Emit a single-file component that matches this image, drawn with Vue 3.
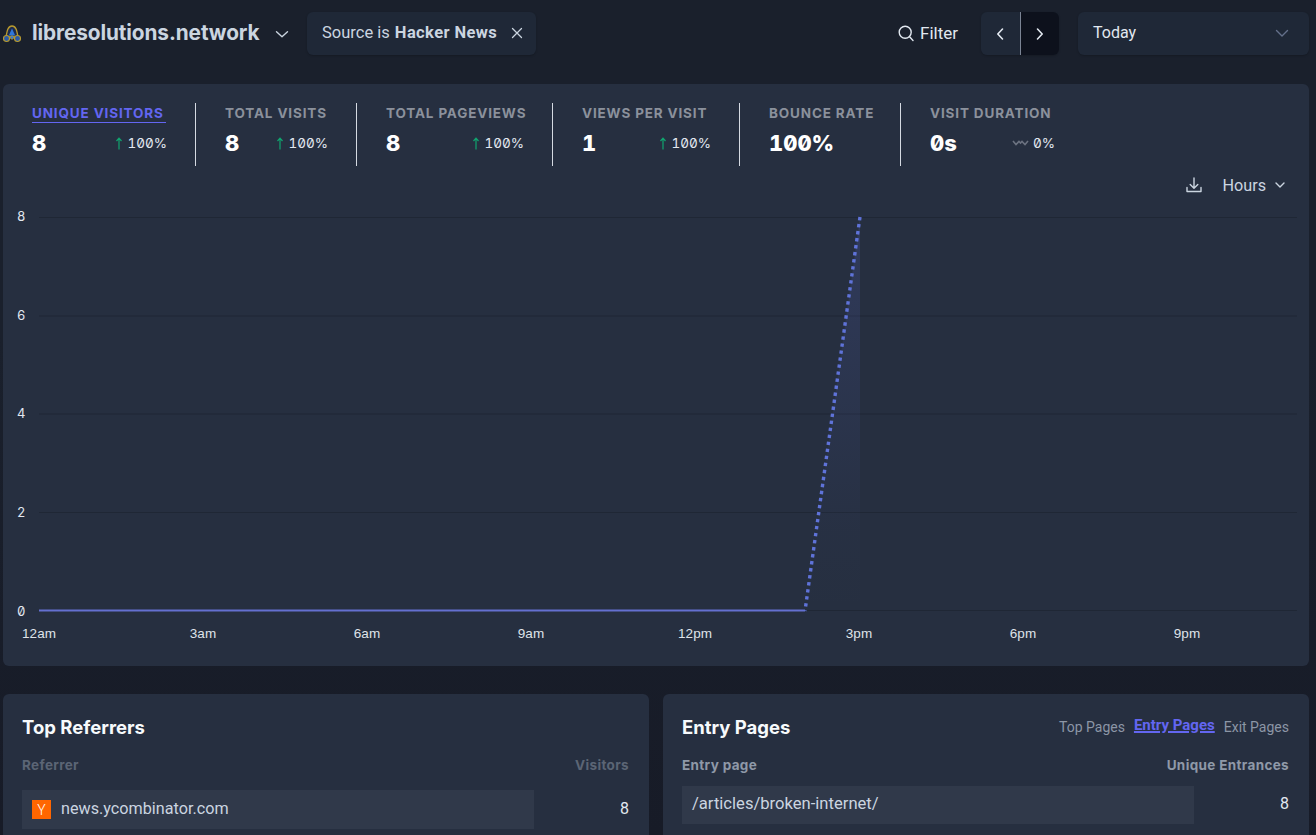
<script setup>
const stats = [
  { label: 'Unique visitors', value: '8', change: '100%', dir: 'up', active: true },
  { label: 'Total visits', value: '8', change: '100%', dir: 'up' },
  { label: 'Total pageviews', value: '8', change: '100%', dir: 'up' },
  { label: 'Views per visit', value: '1', change: '100%', dir: 'up' },
  { label: 'Bounce rate', value: '100%' },
  { label: 'Visit duration', value: '0s', change: '0%', dir: 'flat' }
]
const gridLines = [
  { y: 217.5, base: 221, label: '8' },
  { y: 316, base: 319.5, label: '6' },
  { y: 414, base: 417.5, label: '4' },
  { y: 512.5, base: 517, label: '2' },
  { y: 610.5, base: 616, label: '0' }
]
const hours = [
  { x: 39, label: '12am' },
  { x: 203, label: '3am' },
  { x: 367, label: '6am' },
  { x: 531, label: '9am' },
  { x: 695, label: '12pm' },
  { x: 859, label: '3pm' },
  { x: 1023, label: '6pm' },
  { x: 1187, label: '9pm' }
]
</script>

<template>
  <div class="page">
    <header class="topbar">
      <div class="site">
        <svg class="favicon" width="18" height="18" viewBox="0 0 18 18">
          <path d="M9 1 C5.200 1 4.200 5 3 12 L15 12 C13.800 5 12.800 1 9 1Z" fill="#1d2b4d" stroke="#b89a2e" stroke-width="1.300" />
          <path d="M9 3.500 L5.800 10.500 H12.200Z" fill="#2f78dc" />
          <circle cx="3.500" cy="13.500" r="3" fill="#2a5aa8" stroke="#b89a2e" stroke-width="1.100" />
          <circle cx="14.500" cy="13.500" r="3" fill="#2a5aa8" stroke="#b89a2e" stroke-width="1.100" />
          <circle cx="9" cy="12.500" r="1.700" fill="#2f78dc" stroke="#b89a2e" stroke-width=".8" />
        </svg>
        <span class="site-name">libresolutions.network</span>
        <svg class="site-chev" width="14" height="14" viewBox="0 0 14 14"><path d="M1.500 4.800 7 9.800l5.500-5" fill="none" stroke="#cbd5e0" stroke-width="1.400" stroke-linecap="round" stroke-linejoin="round" /></svg>
      </div>
      <div class="chip">
        <span>Source is <b>Hacker News</b></span>
        <svg width="12" height="12" viewBox="0 0 12 12"><path d="M1.500 1.500l9 9M10.500 1.500l-9 9" stroke="#cbd5e0" stroke-width="1.300" stroke-linecap="round" /></svg>
      </div>
      <div class="spacer"></div>
      <div class="filter">
        <svg width="18" height="18" viewBox="0 0 18 18"><circle cx="8.200" cy="8.200" r="6" fill="none" stroke="#e2e8f0" stroke-width="1.400" /><path d="M12.600 12.800 16 16.400" stroke="#e2e8f0" stroke-width="1.400" stroke-linecap="round" /></svg>
        <span>Filter</span>
      </div>
      <div class="pager">
        <div class="pager-btn">
          <svg width="10" height="14" viewBox="0 0 10 14"><path d="M7.500 2 2.800 7l4.700 5" fill="none" stroke="#e2e8f0" stroke-width="1.600" stroke-linecap="round" stroke-linejoin="round" /></svg>
        </div>
        <div class="pager-btn dark">
          <svg width="10" height="14" viewBox="0 0 10 14"><path d="M2.500 2l4.700 5-4.700 5" fill="none" stroke="#e2e8f0" stroke-width="1.600" stroke-linecap="round" stroke-linejoin="round" /></svg>
        </div>
      </div>
      <div class="period">
        <span>Today</span>
        <svg width="14" height="14" viewBox="0 0 14 14"><path d="M1.500 4.500 7 10l5.500-5.500" fill="none" stroke="#64708a" stroke-width="1.400" stroke-linecap="round" stroke-linejoin="round" /></svg>
      </div>
    </header>

    <section class="card main">
      <div class="stats">
        <div v-for="s in stats" :key="s.label" class="stat">
          <div class="stat-inner">
            <div class="stat-label" :class="{ active: s.active }">{{ s.label }}</div>
            <div class="stat-row">
              <span class="stat-value">{{ s.value }}</span>
              <span v-if="s.change" class="stat-change">
                <svg v-if="s.dir === 'up'" width="8" height="13" viewBox="0 0 8 13"><path d="M4 12.500V1.500M1.500 4 4 1.200 6.500 4" fill="none" stroke="#10a56f" stroke-width="1.200" /></svg>
                <svg v-else width="17" height="8" viewBox="0 0 17 8"><path d="M1 2 4 5.500 7 2.500l1.500 1.500L10 2.500l3 3 3-3.500" fill="none" stroke="#6b7280" stroke-width="1.600" /></svg>
                <span>{{ s.change }}</span>
              </span>
            </div>
          </div>
        </div>
      </div>

      <div class="tools">
        <svg width="18" height="18" viewBox="0 0 18 18"><path d="M9 2v10M5.200 8.500 9 12.300l3.800-3.800M2 11.500v4h14v-4" fill="none" stroke="#cbd5e0" stroke-width="1.400" stroke-linecap="round" stroke-linejoin="round" /></svg>
        <span class="hours">Hours</span>
        <svg width="10" height="10" viewBox="0 0 10 10"><path d="M1 3 5 7l4-4" fill="none" stroke="#cbd5e0" stroke-width="1.400" stroke-linecap="round" stroke-linejoin="round" /></svg>
      </div>

      <svg class="chart" width="1306" height="460" viewBox="3 198 1306 460">
        <defs>
          <linearGradient id="areaFill" x1="0" y1="0" x2="0" y2="1">
            <stop offset="0" stop-color="#5f6fd6" stop-opacity=".18" />
            <stop offset=".8" stop-color="#5f6fd6" stop-opacity=".02" />
            <stop offset="1" stop-color="#5f6fd6" stop-opacity="0" />
          </linearGradient>
        </defs>
        <line v-for="g in gridLines" :key="g.y" x1="39" x2="1297" :y1="g.y" :y2="g.y" stroke="#1f2735" stroke-width="1" />
        <text v-for="g in gridLines" :key="'l' + g.y" x="17" :y="g.base" class="ylabel">{{ g.label }}</text>
        <polygon points="805,611 860,218 860,611" fill="url(#areaFill)" />
        <line x1="39" y1="610.500" x2="805" y2="610.500" stroke="#6470d0" stroke-width="2" />
        <line x1="860" y1="217" x2="805" y2="611" stroke="#5f73d9" stroke-width="3.400" stroke-dasharray="3.400 3.690" />
        <text v-for="h in hours" :key="h.label" :x="h.x" y="638" text-anchor="middle" class="xlabel">{{ h.label }}</text>
      </svg>
    </section>

    <div class="panels">
      <section class="card panel">
        <div class="panel-head"><h3>Top Referrers</h3></div>
        <div class="cols dim"><span>Referrer</span><span>Visitors</span></div>
        <div class="row">
          <div class="bar ref">
            <span class="yc">Y</span>
            <span>news.ycombinator.com</span>
          </div>
          <span class="num">8</span>
        </div>
      </section>
      <section class="card panel">
        <div class="panel-head">
          <h3>Entry Pages</h3>
          <div class="tabs">
            <span>Top Pages</span>
            <span class="tab-active">Entry Pages</span>
            <span>Exit Pages</span>
          </div>
        </div>
        <div class="cols"><span>Entry page</span><span>Unique Entrances</span></div>
        <div class="row page-row">
          <div class="bar page-bar">/articles/broken-internet/</div>
          <span class="num">8</span>
        </div>
      </section>
    </div>
  </div>
</template>

<style>
html, body { margin: 0; overflow: hidden; background: #181d29; }
</style>

<style scoped>
.page {
  height: 835px;
  overflow: hidden;
  box-sizing: border-box;
  padding: 0 7px 0 3px;
  background: linear-gradient(180deg, #1a202c 0%, #1a202c 40%, #171b27 100%);
  font-family: Roboto, "Liberation Sans", sans-serif;
  color: #e2e8f0;
}
.topbar {
  height: 84px;
  box-sizing: border-box;
  padding-top: 12px;
  display: flex;
  align-items: flex-start;
}
.site {
  height: 43px;
  display: flex;
  align-items: center;
  width: 304px;
  flex: none;
}
.favicon { flex: none; margin-right: 11px; }
.site-name {
  font-family: Inter, sans-serif;
  font-weight: 700;
  font-size: 20.800px;
  letter-spacing: -0.1px;
  color: #cbd5e0;
  white-space: nowrap;
  padding-bottom: 2px;
}
.site-chev { margin-left: 16px; flex: none; }
.chip {
  height: 43px;
  width: 229px;
  box-sizing: border-box;
  background: #1f2837;
  border-radius: 6px;
  padding: 0 13px 2px 15px;
  display: flex;
  align-items: center;
  justify-content: space-between;
  font-size: 16.500px;
  color: #cbd5e0;
  box-shadow: 0 1px 2px rgba(0, 0, 0, .2);
}
.chip b { font-weight: 700; letter-spacing: .4px; margin-left: 1px; }
.spacer { flex: 1; }
.filter {
  height: 41px;
  display: flex;
  align-items: center;
  gap: 5px;
  font-size: 17px;
  color: #e2e8f0;
  margin-right: 23px;
}
.pager {
  display: flex;
  height: 43px;
  width: 78px;
  border-radius: 6px;
  overflow: hidden;
  margin-right: 19px;
  box-shadow: 0 1px 2px rgba(0, 0, 0, .2);
}
.pager-btn {
  flex: 1;
  display: flex;
  align-items: center;
  justify-content: center;
  background: #1f2837;
}
.pager-btn.dark { background: #0d111c; border-left: 1px solid #7b8494; }
.period {
  height: 43px;
  width: 231px;
  box-sizing: border-box;
  background: #1f2837;
  border-radius: 6px;
  padding: 0 20px 2px 15px;
  display: flex;
  align-items: center;
  justify-content: space-between;
  font-size: 16px;
  color: #e2e8f0;
  box-shadow: 0 1px 2px rgba(0, 0, 0, .2);
}
.card {
  background: #262f40;
  border-radius: 6px;
}
.main {
  height: 582px;
  padding-top: 19px;
  box-sizing: border-box;
}
.stats {
  display: grid;
  grid-template-columns: 193px 161px 196px 187px 161px 200px;
}
.stat {
  height: 63px;
  box-sizing: border-box;
  padding: 0 29px;
  border-right: 1px solid #d5dae2;
}
.stat:last-child { border-right: 0; }
.stat:last-child .stat-inner { width: 124px; }
.stat-label {
  font-family: Inter, sans-serif;
  font-weight: 700;
  font-size: 13.500px;
  line-height: 18px;
  letter-spacing: .85px;
  text-transform: uppercase;
  color: #8b919c;
  white-space: nowrap;
  margin-top: 1px;
  padding-bottom: 1px;
}
.stat-label.active {
  color: #6366f1;
  border-bottom: 1px solid #6366f1;
  padding-bottom: 0;
}
.stat-row {
  display: flex;
  justify-content: space-between;
  align-items: center;
  margin-top: 5px;
  height: 30px;
}
.stat-value {
  font-family: Inter, sans-serif;
  font-feature-settings: "zero", "tnum";
  font-weight: 800;
  font-size: 22px;
  color: #fff;
}
.stat-change {
  display: flex;
  align-items: center;
  gap: 4px;
  margin-right: -1px;
  font-family: Inter, sans-serif;
  font-feature-settings: "zero", "tnum";
  font-size: 13.500px;
  color: #e2e8f0;
}
.tools {
  height: 34px;
  margin-top: 2px;
  padding-right: 24px;
  display: flex;
  align-items: center;
  justify-content: flex-end;
  color: #cbd5e0;
  font-size: 16.200px;
}
.hours { margin-left: 19px; margin-right: 9px; }
.chart { display: block; margin-top: -4px; }
.ylabel {
  font-family: Inter, sans-serif;
  font-feature-settings: "zero", "tnum";
  font-size: 13px;
  fill: #e2e8f0;
}
.xlabel {
  font-family: "Liberation Sans", Arial, sans-serif;
  font-size: 13.500px;
  fill: #dfe3e9;
}
.panels {
  display: grid;
  grid-template-columns: 646px 646px;
  gap: 14px;
  margin-top: 28px;
}
.panel {
  height: 200px;
  padding: 19px 20px 0 19px;
  box-sizing: border-box;
}
.panel-head {
  height: 27px;
  display: flex;
  align-items: center;
  justify-content: space-between;
}
.panel-head h3 {
  margin: 0;
  font-family: Inter, sans-serif;
  font-weight: 700;
  font-size: 18.500px;
  color: #f7fafc;
}
.tabs {
  display: flex;
  align-items: center;
  gap: 9px;
  font-size: 14px;
  color: #8c96a6;
}
.tab-active {
  color: #6366f1;
  font-weight: 700;
  font-size: 15px;
  text-decoration: underline;
  text-decoration-thickness: 1.500px;
  position: relative;
  top: -2px;
}
.cols {
  display: flex;
  justify-content: space-between;
  margin-top: 16px;
  font-family: Inter, sans-serif;
  font-weight: 700;
  font-size: 13.500px;
  line-height: 18px;
  letter-spacing: .35px;
  color: #8f99a8;
}
.cols.dim { color: #5b6575; }
.row {
  display: flex;
  align-items: center;
  justify-content: space-between;
  margin-top: 16px;
}
.page-row { margin-top: 12px; }
.bar {
  width: 512px;
  box-sizing: border-box;
  background: #30394a;
  display: flex;
  align-items: center;
  font-size: 16.200px;
  color: #cbd5e0;
}
.ref { height: 39px; padding: 0 0 2px 10px; }
.page-bar { height: 38px; padding: 0 0 3px 10px; font-size: 16.600px; }
.yc {
  width: 19px;
  height: 19px;
  margin: 2px 10px 0 0;
  background: #ff6600;
  color: #fff;
  font-size: 14px;
  font-weight: 300;
  display: flex;
  align-items: center;
  justify-content: center;
}
.num { font-size: 16px; color: #e2e8f0; padding-bottom: 3px; }
</style>
